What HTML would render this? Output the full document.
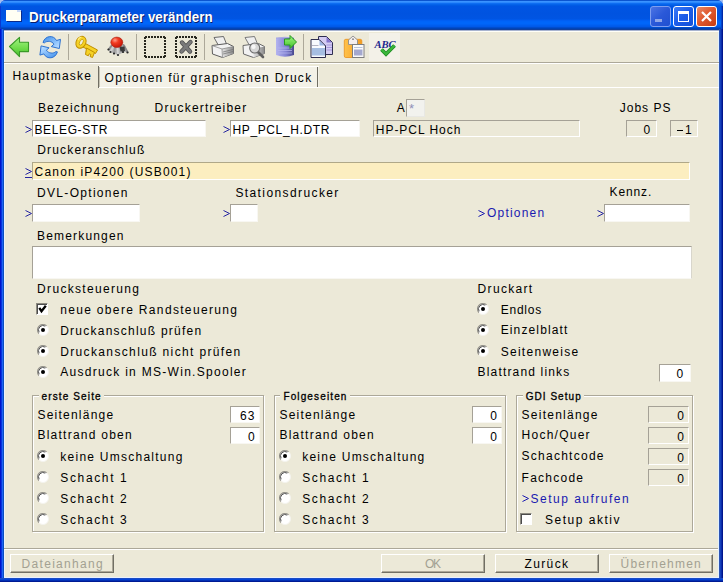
<!DOCTYPE html>
<html><head><meta charset="utf-8"><style>
html,body{margin:0;padding:0;width:723px;height:582px;overflow:hidden;background:#ECE9D8}
*{box-sizing:border-box}
.ab{position:absolute}
.t{position:absolute;font-family:"Liberation Sans",sans-serif;font-size:12px;line-height:13px;white-space:nowrap;color:#000}
.lg{position:absolute;font-family:"Liberation Sans",sans-serif;font-size:10px;line-height:11px;white-space:nowrap;color:#000;-webkit-text-stroke:0.3px #000;background:#ECE9D8;padding:0 2px 0 3px}
.in{position:absolute;background:#fff;border-top:1px solid #A5A196;border-left:1px solid #A5A196;border-right:1px solid #F8F7F2;border-bottom:1px solid #F8F7F2}
.ro{position:absolute;background:#ECE9D8;border-top:1px solid #A5A196;border-left:1px solid #A5A196;border-right:1px solid #fff;border-bottom:1px solid #fff}
.cb{position:absolute;width:12px;height:12px;background:#fff;border-top:1px solid #8C8A80;border-left:1px solid #8C8A80;border-right:1px solid #fff;border-bottom:1px solid #fff;box-shadow:inset 1px 1px 0 #4C4C4C}
.grp{position:absolute;border:1px solid #ACA899;box-shadow:1px 1px 0 #fff, inset 1px 1px 0 #fff}
.btn{position:absolute;background:#ECE9D8;border-top:1px solid #fff;border-left:1px solid #fff;border-right:1px solid #716F64;border-bottom:1px solid #716F64;box-shadow:inset -1px -1px 0 #ACA899}
.lnk{color:#1A1AB0}
.dis{color:#A3A192}
</style></head><body>
<div class="ab" style="left:0;top:0;width:723px;height:12px;background:#A4BEF0"></div>
<div class="ab" style="left:0;top:0;width:723px;height:582px;background:#0831D9;border-radius:6px 6px 0 0"></div>
<div class="ab" style="left:0;top:0;width:723px;height:32px;border-radius:6px 6px 0 0;background:linear-gradient(to bottom,#0B55D0 0px,#0B55D0 1px,#3A93FF 1px,#3A93FF 2px,#2C88FC 2px,#2C88FC 3px,#0E6EF2 3px,#0E6EF2 4px,#0563EA 4px,#0563EA 5px,#005BE5 5px,#005BE5 6px,#0055E3 6px,#0053E0 14px,#0055E3 19px,#005CF0 20px,#0062F8 21px,#0066FA 22px,#0066FA 24px,#005EF0 25px,#005CEC 26px,#0056E6 27px,#0044B8 28px,#0044B8 29px,#1040A0 29px,#1040A0 30px,#A8B4D0 30px,#A8B4D0 31px,#FFFFF8 31px,#FFFFF8 32px)"></div>
<div class="ab" style="left:0;top:6px;width:1px;height:24px;background:#0838D0"></div>
<div class="ab" style="left:0;top:29px;width:4px;height:553px;background:linear-gradient(to right,#0013CC 0px,#0013CC 1px,#0736DE 1px,#0736DE 2px,#1D63F5 2px,#1D63F5 3px,#0A4FBF 3px)"></div>
<div class="ab" style="left:721px;top:6px;width:2px;height:24px;background:linear-gradient(to right,#0444C8 1px,#0028A8 1px)"></div>
<div class="ab" style="left:719px;top:29px;width:4px;height:553px;background:linear-gradient(to right,#2C54B4 0px,#2C54B4 1px,#1540BC 1px,#1540BC 2px,#0A2CA8 2px,#0A2CA8 3px,#00148C 3px)"></div>
<div class="ab" style="left:4px;top:30px;width:715px;height:2px;background:linear-gradient(to bottom,#A8B4D0 1px,#FFFFF8 1px)"></div>
<div class="ab" style="left:0;top:578px;width:723px;height:4px;background:linear-gradient(to bottom,#1A4CC4 0px,#1A4CC4 1px,#0444D8 1px,#0444D8 2px,#0230B4 2px,#0230B4 3px,#001A94 3px)"></div>
<div class="ab" style="left:4px;top:32px;width:715px;height:546px;background:#ECE9D8"></div>
<div class="ab" style="left:4px;top:32px;width:1px;height:546px;background:#EAF2FF"></div>
<div class="ab" style="left:718px;top:32px;width:1px;height:546px;background:#E0F0FF"></div>
<div class="ab" style="left:4px;top:577px;width:715px;height:1px;background:#E8F0FF"></div>
<div class="ab" style="left:6px;top:10px;width:15px;height:11px;background:#FFFFF4;box-shadow:1px 1px 0 #0A2A8A"></div>
<div class="ab" style="left:17px;top:10px;width:4px;height:2px;background:#C8D8F8"></div>
<div class="ab" style="left:29.3px;top:10px;font-family:'Liberation Sans';font-weight:bold;font-size:14px;line-height:15px;color:#fff;letter-spacing:0px;transform:scaleX(0.955);transform-origin:0 0;text-shadow:1px 1px 0 #0A1E6A;white-space:nowrap">Druckerparameter verändern</div>
<div class="ab" style="left:650px;top:6px;width:21px;height:21px;border-radius:3px;border:1px solid #7E9EF0;background:linear-gradient(135deg,#4C74E4,#2A58D8 50%,#2050D0)"></div>
<div class="ab" style="left:655px;top:19px;width:7px;height:3px;background:#8FA6E8"></div>
<div class="ab" style="left:673px;top:6px;width:21px;height:21px;border-radius:3px;border:1px solid #fff;background:linear-gradient(135deg,#3C7CF8,#1C5CE8 50%,#1450D8)"></div>
<div class="ab" style="left:678px;top:11px;width:11px;height:11px;border:1px solid #fff;border-top-width:3px"></div>
<div class="ab" style="left:696px;top:6px;width:21px;height:21px;border-radius:3px;border:1px solid #fff;background:linear-gradient(135deg,#E88A68,#E05A30 45%,#C83C10)"></div>
<svg class="ab" style="left:696px;top:6px" width="21" height="21"><path d="M6 6 L15 15 M15 6 L6 15" stroke="#fff" stroke-width="2.2"/></svg>
<div class="ab" style="left:4px;top:62px;width:715px;height:1px;background:#ACA899"></div>
<div class="ab" style="left:4px;top:63px;width:715px;height:1px;background:#FFFFFF"></div>
<div class="ab" style="left:68px;top:34px;width:1px;height:26px;background:#ACA899"></div>
<div class="ab" style="left:136px;top:34px;width:1px;height:26px;background:#ACA899"></div>
<div class="ab" style="left:204px;top:34px;width:1px;height:26px;background:#ACA899"></div>
<div class="ab" style="left:303px;top:34px;width:1px;height:26px;background:#ACA899"></div>

<svg class="ab" style="left:4px;top:33px" width="28" height="28" viewBox="0 0 28 28">
 <defs><linearGradient id="ga" x1="0" y1="0" x2="0" y2="1"><stop offset="0" stop-color="#A4F484"/><stop offset="0.6" stop-color="#6CDA48"/><stop offset="1" stop-color="#48BC30"/></linearGradient></defs>
 <path d="M5.5 13.5 L15.5 4.3 L15.5 9.3 L24.5 9.3 L24.5 18.6 L15.5 18.6 L15.5 23.6 Z" fill="url(#ga)" stroke="#3A9A28" stroke-width="1.1" stroke-linejoin="round"/>
</svg>
<svg class="ab" style="left:36px;top:33px" width="28" height="28" viewBox="0 0 28 28">
 <defs><linearGradient id="gb" x1="0" y1="0" x2="1" y2="1"><stop offset="0" stop-color="#3E8EEA"/><stop offset="0.7" stop-color="#9CCCFF"/><stop offset="1" stop-color="#C8E4FF"/></linearGradient></defs>
 <path id="ar" d="M7 9.5 C9 2.5 17.5 1.5 20.5 7.5 L24.5 6.3 L23.3 15.5 L15.3 13.6 L18 11.2 C15.8 7.8 11 7.5 8.6 9.8 Z" fill="url(#gb)" stroke="#2E72D0" stroke-width="1" stroke-linejoin="round"/>
 <use href="#ar" transform="rotate(180 14.2 14.2)"/>
</svg>
<svg class="ab" style="left:72px;top:33px" width="28" height="28" viewBox="0 0 28 28">
 <g stroke="#C09000" stroke-width="1" fill="#F6D226" stroke-linejoin="round">
 <path d="M11.5 9.5 L25.5 17 L23.5 20.5 L10 13.5 Z"/>
 <path d="M14.5 15 L22.5 19.5 L20.5 24.5 L18 23.5 L18.8 21.5 L17.2 20.8 L16.3 22.8 L13.5 21.5 Z"/>
 <ellipse cx="9" cy="9.3" rx="4.8" ry="6.2" transform="rotate(28 9 9.3)"/>
 </g>
 <ellipse cx="9.3" cy="9.3" rx="1.6" ry="3.2" transform="rotate(28 9.3 9.3)" fill="#F2F0DC" stroke="#C8A000" stroke-width="0.8"/>
 <path d="M6 7 Q7 4.5 9.5 4" stroke="#FFF08A" stroke-width="1.2" fill="none"/>
</svg>
<svg class="ab" style="left:104px;top:33px" width="28" height="28" viewBox="0 0 28 28">
 <path d="M6 12.5 Q13 9.5 21 12 L24 18.5 L19 19.5 L14 22 L10 20.5 L6.5 19 L4 16.5 Z" fill="#B4B4B4"/>
 <g stroke-width="1.8" fill="none" stroke-linecap="round">
 <path d="M8 12.5 L4.5 16.5" stroke="#8A8A8A"/><path d="M9.5 13 L6.5 19" stroke="#D0D0D0"/><path d="M11.5 13 L10 20.5" stroke="#9A9A9A"/>
 <path d="M13.5 13 L14 22" stroke="#D4D4D4"/><path d="M16.5 13 L19 19" stroke="#7A7A7A"/><path d="M19.5 12 L23.5 19" stroke="#8A8A8A"/>
 </g>
 <g fill="#2A2A2A"><circle cx="4.5" cy="16.5" r="1.1"/><circle cx="6.5" cy="19" r="1.1"/><circle cx="10" cy="20.5" r="1.1"/><circle cx="14" cy="22" r="1.1"/><circle cx="19" cy="19" r="1.1"/><circle cx="23.5" cy="19.5" r="1.1"/></g>
 <path d="M15.5 14 L20.5 13.5 L21 18 L16.5 18.5 Z" fill="#3A3A3A"/>
 <defs><radialGradient id="gr" cx="0.35" cy="0.3" r="0.7"><stop offset="0" stop-color="#FF9A88"/><stop offset="0.4" stop-color="#F23C22"/><stop offset="1" stop-color="#C81808"/></radialGradient></defs>
 <ellipse cx="12.8" cy="9.3" rx="6" ry="5.2" fill="url(#gr)" stroke="#A82010" stroke-width="0.6"/>
</svg>
<svg class="ab" style="left:144px;top:36px" width="22" height="22" shape-rendering="crispEdges"><g fill="#26261E"><rect x="1" y="0" width="2" height="2"/><rect x="1" y="20" width="2" height="2"/><rect x="0" y="1" width="2" height="2"/><rect x="20" y="1" width="2" height="2"/><rect x="4" y="0" width="2" height="2"/><rect x="4" y="20" width="2" height="2"/><rect x="0" y="4" width="2" height="2"/><rect x="20" y="4" width="2" height="2"/><rect x="7" y="0" width="2" height="2"/><rect x="7" y="20" width="2" height="2"/><rect x="0" y="7" width="2" height="2"/><rect x="20" y="7" width="2" height="2"/><rect x="10" y="0" width="2" height="2"/><rect x="10" y="20" width="2" height="2"/><rect x="0" y="10" width="2" height="2"/><rect x="20" y="10" width="2" height="2"/><rect x="13" y="0" width="2" height="2"/><rect x="13" y="20" width="2" height="2"/><rect x="0" y="13" width="2" height="2"/><rect x="20" y="13" width="2" height="2"/><rect x="16" y="0" width="2" height="2"/><rect x="16" y="20" width="2" height="2"/><rect x="0" y="16" width="2" height="2"/><rect x="20" y="16" width="2" height="2"/><rect x="19" y="0" width="2" height="2"/><rect x="19" y="20" width="2" height="2"/><rect x="0" y="19" width="2" height="2"/><rect x="20" y="19" width="2" height="2"/></g></svg>
<svg class="ab" style="left:175px;top:36px" width="22" height="22" shape-rendering="crispEdges"><g fill="#26261E"><rect x="1" y="0" width="2" height="2"/><rect x="1" y="20" width="2" height="2"/><rect x="0" y="1" width="2" height="2"/><rect x="20" y="1" width="2" height="2"/><rect x="4" y="0" width="2" height="2"/><rect x="4" y="20" width="2" height="2"/><rect x="0" y="4" width="2" height="2"/><rect x="20" y="4" width="2" height="2"/><rect x="7" y="0" width="2" height="2"/><rect x="7" y="20" width="2" height="2"/><rect x="0" y="7" width="2" height="2"/><rect x="20" y="7" width="2" height="2"/><rect x="10" y="0" width="2" height="2"/><rect x="10" y="20" width="2" height="2"/><rect x="0" y="10" width="2" height="2"/><rect x="20" y="10" width="2" height="2"/><rect x="13" y="0" width="2" height="2"/><rect x="13" y="20" width="2" height="2"/><rect x="0" y="13" width="2" height="2"/><rect x="20" y="13" width="2" height="2"/><rect x="16" y="0" width="2" height="2"/><rect x="16" y="20" width="2" height="2"/><rect x="0" y="16" width="2" height="2"/><rect x="20" y="16" width="2" height="2"/><rect x="19" y="0" width="2" height="2"/><rect x="19" y="20" width="2" height="2"/><rect x="0" y="19" width="2" height="2"/><rect x="20" y="19" width="2" height="2"/></g></svg>
<svg class="ab" style="left:173px;top:33px" width="28" height="28" viewBox="0 0 28 28">
 <path d="M8.5 18.5 L17.5 9 M9 9.5 L17 18.5" stroke="#505050" stroke-width="4.4" stroke-linecap="round"/>
 <path d="M8.5 18.5 L17.5 9 M9 9.5 L17 18.5" stroke="#7A7A7A" stroke-width="2.8" stroke-linecap="round"/>
</svg>
<svg class="ab" style="left:208px;top:33px" width="28" height="28" viewBox="0 0 28 28">
 <defs><linearGradient id="gp" x1="0" y1="0" x2="1" y2="0"><stop offset="0" stop-color="#E6E6E6"/><stop offset="1" stop-color="#8A8A8A"/></linearGradient></defs>
 <path d="M6 4.5 L15.5 3.5 L18.5 11 L10.5 12.5 Z" fill="#EFEFEF" stroke="#6A6A6A" stroke-width="1"/>
 <path d="M4 12.5 L19.5 10.5 L25.5 13.5 L25.5 20.5 L14.5 24.5 L4.5 21 Z" fill="#F2F2F2" stroke="#5E5E5E" stroke-width="1" stroke-linejoin="round"/>
 <path d="M14 16 L25.5 13.5 L25.5 20.5 L14.5 24.5 Z" fill="url(#gp)"/>
 <path d="M4 12.5 L14 16 L25.5 13.5 M14 16 L14.5 24.5" stroke="#8A8A8A" stroke-width="0.8" fill="none"/>
 <path d="M15 19 L25 16.5 M15 21 L25 18.5" stroke="#707070" stroke-width="0.7"/>
</svg>
<svg class="ab" style="left:239px;top:33px" width="28" height="28" viewBox="0 0 28 28">
 <path d="M6 4.5 L15.5 3.5 L18.5 11 L10.5 12.5 Z" fill="#EFEFEF" stroke="#7A7A7A" stroke-width="1"/>
 <path d="M4 12.5 L19.5 10.5 L25.5 13.5 L25.5 20.5 L14.5 24.5 L4.5 21 Z" fill="#F2F2F2" stroke="#6A6A6A" stroke-width="1" stroke-linejoin="round"/>
 <path d="M14 16 L25.5 13.5 L25.5 20.5 L14.5 24.5 Z" fill="url(#gp)"/>
 <path d="M18.5 18.5 L24 24" stroke="#606060" stroke-width="2.6" stroke-linecap="round"/>
 <circle cx="15.7" cy="15" r="5" fill="#D6D6D6" stroke="#6A6A6A" stroke-width="1.1"/>
 <circle cx="14.5" cy="13.8" r="2.2" fill="#F6F6F6"/>
</svg>
<svg class="ab" style="left:272px;top:33px" width="28" height="28" viewBox="0 0 28 28">
 <defs><linearGradient id="gd" x1="0" y1="0" x2="1" y2="0"><stop offset="0" stop-color="#B4B4F0"/><stop offset="0.55" stop-color="#8484D4"/><stop offset="1" stop-color="#48488E"/></linearGradient>
 <linearGradient id="ge" x1="0" y1="0" x2="0" y2="1"><stop offset="0" stop-color="#A0F880"/><stop offset="1" stop-color="#40C02A"/></linearGradient></defs>
 <path d="M4 5 L22 5 L22 22 Q13 25.5 4 22 Z" fill="url(#gd)"/>
 <path d="M4 5 Q13 3.5 22 5" fill="#C0C0F0" stroke="#A0A0E0" stroke-width="0.8"/>
 <path d="M6 15 L20 15 M6 17.5 L20 17.5 M6 20 L20 20" stroke="#B8B8EE" stroke-width="0.9" opacity="0.8"/>
 <path d="M12.5 6 L18 6 L18 2.5 L24.5 9 L18 15.5 L18 12 L12.5 12 Z" fill="url(#ge)" stroke="#2A9A20" stroke-width="1" stroke-linejoin="round"/>
</svg>
<svg class="ab" style="left:306px;top:33px" width="28" height="28" viewBox="0 0 28 28">
 <path d="M12.5 3.5 L20.5 3.5 L26.5 9.5 L26.5 21.5 L19.5 21.5 L19.5 13 L13 6.5 L12.5 6.5 Z" fill="#D4CCF2" stroke="#2E2E50" stroke-width="1" stroke-linejoin="round"/>
 <path d="M20.5 4 L26 9.5 L20.5 9.5 Z" fill="#8474CC"/>
 <path d="M20.5 12 L26 12 M20.5 14.5 L26 14.5 M20.5 17 L26 17" stroke="#A898DC" stroke-width="1"/>
 <path d="M5 6.5 L13 6.5 L19.5 13 L19.5 24.5 L5 24.5 Z" fill="#F8FAFF" stroke="#2E2E50" stroke-width="1" stroke-linejoin="round"/>
 <path d="M13.5 7.5 L13.5 12.5 L18.5 12.5 Z" fill="#9CB4E4"/>
 <rect x="6" y="15" width="13" height="7.5" fill="#A6BEE2"/>
 <path d="M6 12.5 L12.5 12.5" stroke="#B4B4C4" stroke-width="1"/>
</svg>
<svg class="ab" style="left:340px;top:33px" width="28" height="28" viewBox="0 0 28 28">
 <defs><linearGradient id="gf" x1="0" y1="0" x2="1" y2="0"><stop offset="0" stop-color="#FFC24A"/><stop offset="1" stop-color="#F29A1E"/></linearGradient></defs>
 <rect x="4.3" y="6.3" width="17.5" height="18.2" rx="1.5" fill="url(#gf)" stroke="#E8901A" stroke-width="0.8"/>
 <path d="M8.5 11.5 L8.5 7 L13 3 L17.5 7 L17.5 11.5 Z" fill="#F4EEEE" stroke="#8C8C8C" stroke-width="0.9" stroke-linejoin="round"/>
 <circle cx="13" cy="6.2" r="0.9" fill="#808080"/>
 <rect x="12.5" y="11.5" width="11.5" height="13" fill="#FAFAFA" stroke="#7E7E7E" stroke-width="1"/>
 <path d="M14 14.5 L22.5 14.5" stroke="#B8C4DC" stroke-width="1"/>
 <rect x="14" y="16.5" width="8.5" height="6" fill="#A4A8CE"/>
</svg>
<div class="ab" style="left:369px;top:33px;width:31px;height:28px;background:#F3F1E8"></div>
<svg class="ab" style="left:372px;top:33px" width="28" height="28" viewBox="0 0 28 28">
 <text x="2.4" y="14.6" font-family="Liberation Serif" font-style="italic" font-weight="bold" font-size="11.2" fill="#1E2A8E" textLength="21.3" lengthAdjust="spacingAndGlyphs">ABC</text>
 <path d="M9.5 16.5 L14 21 L22.5 12.5" stroke="#1E8E22" stroke-width="3.8" fill="none"/>
 <path d="M9.5 16.5 L14 21 L22.5 12.5" stroke="#3CB83C" stroke-width="2" fill="none"/>
</svg>
<div class="ab" style="left:99px;top:66px;width:220px;height:22px;background:#F3F1E7;border-top:1px solid #fff"></div>
<div class="ab" style="left:98px;top:66px;width:1px;height:22px;background:#716F64"></div>
<div class="ab" style="left:99px;top:67px;width:1px;height:20px;background:#C5C2B2"></div>
<div class="ab" style="left:317px;top:67px;width:1px;height:21px;background:#716F64"></div>
<div class="ab" style="left:99px;top:87px;width:620px;height:1px;background:#FFFFFF"></div>
<div class="t" style="left:12.4px;top:70px;letter-spacing:1.25px;">Hauptmaske</div>
<div class="t" style="left:104.6px;top:72px;letter-spacing:1.28px;">Optionen für graphischen Druck</div>
<div class="t" style="left:37.9px;top:102px;letter-spacing:1.16px;">Bezeichnung</div>
<div class="t" style="left:154.6px;top:102px;letter-spacing:1.20px;">Druckertreiber</div>
<div class="t" style="left:396.8px;top:102px;letter-spacing:0.00px;">A</div>
<div class="ro" style="left:406px;top:99px;width:19px;height:18px;background:#F2F2EE;border-right:1px solid #E8E8E4;border-bottom:1px solid #E8E8E4"></div>
<div class="t" style="left:409.0px;top:102px;letter-spacing:1.25px;color:#9090B8;font-size:13px">*</div>
<div class="t" style="left:619.7px;top:102px;letter-spacing:1.02px;">Jobs PS</div>
<svg class="ab" style="left:25px;top:126px" width="7" height="7"><path d="M0.5 0.5 L6.5 3.5 L0.5 6.5" stroke="#2424A0" stroke-width="1" fill="none"/></svg>
<div class="in" style="left:32px;top:120px;width:174px;height:17px;"></div>
<div class="t" style="left:34.5px;top:124px;letter-spacing:0.62px;">BELEG-STR</div>
<svg class="ab" style="left:223px;top:126px" width="7" height="7"><path d="M0.5 0.5 L6.5 3.5 L0.5 6.5" stroke="#2424A0" stroke-width="1" fill="none"/></svg>
<div class="in" style="left:230px;top:120px;width:130px;height:17px;"></div>
<div class="t" style="left:232.5px;top:124px;letter-spacing:0.62px;">HP_PCL_H.DTR</div>
<div class="ro" style="left:373px;top:120px;width:207px;height:17px;"></div>
<div class="t" style="left:375.8px;top:124px;letter-spacing:0.97px;">HP-PCL Hoch</div>
<div class="ro" style="left:626px;top:120px;width:31px;height:17px;"></div>
<div class="t" style="left:643.6px;top:124px;letter-spacing:1.25px;letter-spacing:1.0px;">0</div>
<div class="ro" style="left:670px;top:120px;width:28px;height:17px;"></div>
<div class="ab" style="left:677px;top:130px;width:6px;height:1px;background:#000"></div>
<div class="t" style="left:685.0px;top:124px;letter-spacing:1.25px;letter-spacing:1.0px;">1</div>
<div class="t" style="left:37.3px;top:144px;letter-spacing:1.16px;">Druckeranschluß</div>
<svg class="ab" style="left:25px;top:168px" width="7" height="10"><path d="M0.5 0.5 L6.5 3.5 L0.5 6.5" stroke="#2424A0" stroke-width="1" fill="none"/><rect x="0" y="9" width="7" height="1" fill="#2424A0"/></svg>
<div class="in" style="left:32px;top:162px;width:658px;height:18px;background:#FCEEC0;border-top-color:#B0A888;border-left-color:#B0A888;border-bottom-color:#FFFFFF;border-right-color:#FFFFFF"></div>
<div class="t" style="left:34.6px;top:166px;letter-spacing:1.19px;">Canon iP4200 (USB001)</div>
<div class="t" style="left:37.1px;top:187px;letter-spacing:1.30px;">DVL-Optionen</div>
<div class="t" style="left:235.4px;top:187px;letter-spacing:1.40px;">Stationsdrucker</div>
<div class="t" style="left:609.6px;top:186px;letter-spacing:0.87px;">Kennz.</div>
<svg class="ab" style="left:25px;top:210px" width="7" height="7"><path d="M0.5 0.5 L6.5 3.5 L0.5 6.5" stroke="#2424A0" stroke-width="1" fill="none"/></svg>
<div class="in" style="left:32px;top:204px;width:108px;height:18px;"></div>
<svg class="ab" style="left:223px;top:210px" width="7" height="7"><path d="M0.5 0.5 L6.5 3.5 L0.5 6.5" stroke="#2424A0" stroke-width="1" fill="none"/></svg>
<div class="in" style="left:230px;top:204px;width:28px;height:18px;"></div>
<svg class="ab" style="left:478px;top:210px" width="7" height="7"><path d="M0.5 0.5 L6.5 3.5 L0.5 6.5" stroke="#1A1AB0" stroke-width="1" fill="none"/></svg>
<div class="t" style="left:487.0px;top:207px;letter-spacing:1.20px;color:#1A1AB0;">Optionen</div>
<svg class="ab" style="left:597px;top:210px" width="7" height="7"><path d="M0.5 0.5 L6.5 3.5 L0.5 6.5" stroke="#2424A0" stroke-width="1" fill="none"/></svg>
<div class="in" style="left:604px;top:204px;width:86px;height:18px;"></div>
<div class="t" style="left:37.1px;top:230px;letter-spacing:1.16px;">Bemerkungen</div>
<div class="in" style="left:32px;top:246px;width:660px;height:33px;border-right:1px solid #D8D6CC"></div>
<div class="t" style="left:37.1px;top:283px;letter-spacing:1.32px;">Drucksteuerung</div>
<div class="cb" style="left:36px;top:303px"><svg width="12" height="12" style="position:absolute;left:0;top:0"><path d="M2.3 3.8 L4.5 7.2 L8.8 1.8" stroke="#000" stroke-width="2.3" fill="none"/></svg></div>
<div class="t" style="left:60.2px;top:304px;letter-spacing:1.33px;">neue obere Randsteuerung</div>
<svg class="ab" style="left:37px;top:324px" width="12" height="12" viewBox="0 0 12 12"><circle cx="6" cy="6" r="5.5" fill="#fff"/><path d="M1.79 9.54 A5.5 5.5 0 0 1 9.54 1.79" stroke="#8E8C84" stroke-width="1.1" fill="none"/><path d="M2.10 8.25 A4.5 4.5 0 0 1 8.25 2.10" stroke="#4A4A4A" stroke-width="1" fill="none"/><path d="M9.89 2.11 A5.5 5.5 0 0 1 2.11 9.89" stroke="#F4F3EE" stroke-width="1" fill="none"/><circle cx="6" cy="6" r="2" fill="#000"/></svg>
<div class="t" style="left:60.2px;top:325px;letter-spacing:1.24px;">Druckanschluß prüfen</div>
<svg class="ab" style="left:37px;top:345px" width="12" height="12" viewBox="0 0 12 12"><circle cx="6" cy="6" r="5.5" fill="#fff"/><path d="M1.79 9.54 A5.5 5.5 0 0 1 9.54 1.79" stroke="#8E8C84" stroke-width="1.1" fill="none"/><path d="M2.10 8.25 A4.5 4.5 0 0 1 8.25 2.10" stroke="#4A4A4A" stroke-width="1" fill="none"/><path d="M9.89 2.11 A5.5 5.5 0 0 1 2.11 9.89" stroke="#F4F3EE" stroke-width="1" fill="none"/><circle cx="6" cy="6" r="2" fill="#000"/></svg>
<div class="t" style="left:60.2px;top:346px;letter-spacing:1.36px;">Druckanschluß nicht prüfen</div>
<svg class="ab" style="left:37px;top:366px" width="12" height="12" viewBox="0 0 12 12"><circle cx="6" cy="6" r="5.5" fill="#fff"/><path d="M1.79 9.54 A5.5 5.5 0 0 1 9.54 1.79" stroke="#8E8C84" stroke-width="1.1" fill="none"/><path d="M2.10 8.25 A4.5 4.5 0 0 1 8.25 2.10" stroke="#4A4A4A" stroke-width="1" fill="none"/><path d="M9.89 2.11 A5.5 5.5 0 0 1 2.11 9.89" stroke="#F4F3EE" stroke-width="1" fill="none"/><circle cx="6" cy="6" r="2" fill="#000"/></svg>
<div class="t" style="left:60.2px;top:366px;letter-spacing:1.29px;">Ausdruck in MS-Win.Spooler</div>
<div class="t" style="left:477.6px;top:283px;letter-spacing:1.32px;">Druckart</div>
<svg class="ab" style="left:477px;top:303px" width="12" height="12" viewBox="0 0 12 12"><circle cx="6" cy="6" r="5.5" fill="#fff"/><path d="M1.79 9.54 A5.5 5.5 0 0 1 9.54 1.79" stroke="#8E8C84" stroke-width="1.1" fill="none"/><path d="M2.10 8.25 A4.5 4.5 0 0 1 8.25 2.10" stroke="#4A4A4A" stroke-width="1" fill="none"/><path d="M9.89 2.11 A5.5 5.5 0 0 1 2.11 9.89" stroke="#F4F3EE" stroke-width="1" fill="none"/><circle cx="6" cy="6" r="2" fill="#000"/></svg>
<div class="t" style="left:500.7px;top:304px;letter-spacing:0.76px;">Endlos</div>
<svg class="ab" style="left:477px;top:324px" width="12" height="12" viewBox="0 0 12 12"><circle cx="6" cy="6" r="5.5" fill="#fff"/><path d="M1.79 9.54 A5.5 5.5 0 0 1 9.54 1.79" stroke="#8E8C84" stroke-width="1.1" fill="none"/><path d="M2.10 8.25 A4.5 4.5 0 0 1 8.25 2.10" stroke="#4A4A4A" stroke-width="1" fill="none"/><path d="M9.89 2.11 A5.5 5.5 0 0 1 2.11 9.89" stroke="#F4F3EE" stroke-width="1" fill="none"/><circle cx="6" cy="6" r="2" fill="#000"/></svg>
<div class="t" style="left:500.7px;top:324px;letter-spacing:1.13px;">Einzelblatt</div>
<svg class="ab" style="left:477px;top:344.5px" width="12" height="12" viewBox="0 0 12 12"><circle cx="6" cy="6" r="5.5" fill="#fff"/><path d="M1.79 9.54 A5.5 5.5 0 0 1 9.54 1.79" stroke="#8E8C84" stroke-width="1.1" fill="none"/><path d="M2.10 8.25 A4.5 4.5 0 0 1 8.25 2.10" stroke="#4A4A4A" stroke-width="1" fill="none"/><path d="M9.89 2.11 A5.5 5.5 0 0 1 2.11 9.89" stroke="#F4F3EE" stroke-width="1" fill="none"/><circle cx="6" cy="6" r="2" fill="#000"/></svg>
<div class="t" style="left:500.7px;top:346px;letter-spacing:1.28px;">Seitenweise</div>
<div class="t" style="left:477.6px;top:366px;letter-spacing:1.16px;">Blattrand links</div>
<div class="in" style="left:659px;top:364px;width:32px;height:18px;"></div>
<div class="t" style="left:676.4px;top:368px;letter-spacing:1.25px;letter-spacing:1.0px;">0</div>
<div class="grp" style="left:32px;top:395px;width:232px;height:137px;"></div>
<div class="lg" style="left:38.6px;top:391px;letter-spacing:1.12px">erste Seite</div>
<div class="grp" style="left:274px;top:395px;width:232px;height:137px;"></div>
<div class="lg" style="left:280.4px;top:391px;letter-spacing:1.13px">Folgeseiten</div>
<div class="grp" style="left:516px;top:395px;width:177px;height:137px;"></div>
<div class="lg" style="left:522.7px;top:391px;letter-spacing:1.04px">GDI Setup</div>
<div class="t" style="left:37.4px;top:409px;letter-spacing:1.24px;">Seitenlänge</div>
<div class="in" style="left:230px;top:406px;width:30px;height:17px;"></div>
<div class="t" style="left:37.4px;top:429px;letter-spacing:1.25px;">Blattrand oben</div>
<div class="in" style="left:230px;top:427px;width:30px;height:17px;"></div>
<svg class="ab" style="left:37px;top:450px" width="12" height="12" viewBox="0 0 12 12"><circle cx="6" cy="6" r="5.5" fill="#fff"/><path d="M1.79 9.54 A5.5 5.5 0 0 1 9.54 1.79" stroke="#8E8C84" stroke-width="1.1" fill="none"/><path d="M2.10 8.25 A4.5 4.5 0 0 1 8.25 2.10" stroke="#4A4A4A" stroke-width="1" fill="none"/><path d="M9.89 2.11 A5.5 5.5 0 0 1 2.11 9.89" stroke="#F4F3EE" stroke-width="1" fill="none"/><circle cx="6" cy="6" r="2" fill="#000"/></svg>
<div class="t" style="left:60.3px;top:451px;letter-spacing:1.25px;">keine Umschaltung</div>
<svg class="ab" style="left:37px;top:471px" width="12" height="12" viewBox="0 0 12 12"><circle cx="6" cy="6" r="5.5" fill="#fff"/><path d="M1.79 9.54 A5.5 5.5 0 0 1 9.54 1.79" stroke="#8E8C84" stroke-width="1.1" fill="none"/><path d="M2.10 8.25 A4.5 4.5 0 0 1 8.25 2.10" stroke="#4A4A4A" stroke-width="1" fill="none"/><path d="M9.89 2.11 A5.5 5.5 0 0 1 2.11 9.89" stroke="#F4F3EE" stroke-width="1" fill="none"/></svg>
<div class="t" style="left:60.3px;top:472px;letter-spacing:1.64px;">Schacht 1</div>
<svg class="ab" style="left:37px;top:492px" width="12" height="12" viewBox="0 0 12 12"><circle cx="6" cy="6" r="5.5" fill="#fff"/><path d="M1.79 9.54 A5.5 5.5 0 0 1 9.54 1.79" stroke="#8E8C84" stroke-width="1.1" fill="none"/><path d="M2.10 8.25 A4.5 4.5 0 0 1 8.25 2.10" stroke="#4A4A4A" stroke-width="1" fill="none"/><path d="M9.89 2.11 A5.5 5.5 0 0 1 2.11 9.89" stroke="#F4F3EE" stroke-width="1" fill="none"/></svg>
<div class="t" style="left:60.3px;top:493px;letter-spacing:1.64px;">Schacht 2</div>
<svg class="ab" style="left:37px;top:513px" width="12" height="12" viewBox="0 0 12 12"><circle cx="6" cy="6" r="5.5" fill="#fff"/><path d="M1.79 9.54 A5.5 5.5 0 0 1 9.54 1.79" stroke="#8E8C84" stroke-width="1.1" fill="none"/><path d="M2.10 8.25 A4.5 4.5 0 0 1 8.25 2.10" stroke="#4A4A4A" stroke-width="1" fill="none"/><path d="M9.89 2.11 A5.5 5.5 0 0 1 2.11 9.89" stroke="#F4F3EE" stroke-width="1" fill="none"/></svg>
<div class="t" style="left:60.3px;top:514px;letter-spacing:1.64px;">Schacht 3</div>
<div class="t" style="left:279.4px;top:409px;letter-spacing:1.24px;">Seitenlänge</div>
<div class="in" style="left:472px;top:406px;width:30px;height:17px;"></div>
<div class="t" style="left:279.4px;top:429px;letter-spacing:1.25px;">Blattrand oben</div>
<div class="in" style="left:472px;top:427px;width:30px;height:17px;"></div>
<svg class="ab" style="left:279px;top:450px" width="12" height="12" viewBox="0 0 12 12"><circle cx="6" cy="6" r="5.5" fill="#fff"/><path d="M1.79 9.54 A5.5 5.5 0 0 1 9.54 1.79" stroke="#8E8C84" stroke-width="1.1" fill="none"/><path d="M2.10 8.25 A4.5 4.5 0 0 1 8.25 2.10" stroke="#4A4A4A" stroke-width="1" fill="none"/><path d="M9.89 2.11 A5.5 5.5 0 0 1 2.11 9.89" stroke="#F4F3EE" stroke-width="1" fill="none"/><circle cx="6" cy="6" r="2" fill="#000"/></svg>
<div class="t" style="left:302.2px;top:451px;letter-spacing:1.25px;">keine Umschaltung</div>
<svg class="ab" style="left:279px;top:471px" width="12" height="12" viewBox="0 0 12 12"><circle cx="6" cy="6" r="5.5" fill="#fff"/><path d="M1.79 9.54 A5.5 5.5 0 0 1 9.54 1.79" stroke="#8E8C84" stroke-width="1.1" fill="none"/><path d="M2.10 8.25 A4.5 4.5 0 0 1 8.25 2.10" stroke="#4A4A4A" stroke-width="1" fill="none"/><path d="M9.89 2.11 A5.5 5.5 0 0 1 2.11 9.89" stroke="#F4F3EE" stroke-width="1" fill="none"/></svg>
<div class="t" style="left:302.2px;top:472px;letter-spacing:1.64px;">Schacht 1</div>
<svg class="ab" style="left:279px;top:492px" width="12" height="12" viewBox="0 0 12 12"><circle cx="6" cy="6" r="5.5" fill="#fff"/><path d="M1.79 9.54 A5.5 5.5 0 0 1 9.54 1.79" stroke="#8E8C84" stroke-width="1.1" fill="none"/><path d="M2.10 8.25 A4.5 4.5 0 0 1 8.25 2.10" stroke="#4A4A4A" stroke-width="1" fill="none"/><path d="M9.89 2.11 A5.5 5.5 0 0 1 2.11 9.89" stroke="#F4F3EE" stroke-width="1" fill="none"/></svg>
<div class="t" style="left:302.2px;top:493px;letter-spacing:1.64px;">Schacht 2</div>
<svg class="ab" style="left:279px;top:513px" width="12" height="12" viewBox="0 0 12 12"><circle cx="6" cy="6" r="5.5" fill="#fff"/><path d="M1.79 9.54 A5.5 5.5 0 0 1 9.54 1.79" stroke="#8E8C84" stroke-width="1.1" fill="none"/><path d="M2.10 8.25 A4.5 4.5 0 0 1 8.25 2.10" stroke="#4A4A4A" stroke-width="1" fill="none"/><path d="M9.89 2.11 A5.5 5.5 0 0 1 2.11 9.89" stroke="#F4F3EE" stroke-width="1" fill="none"/></svg>
<div class="t" style="left:302.2px;top:514px;letter-spacing:1.64px;">Schacht 3</div>
<div class="t" style="left:240.0px;top:410px;letter-spacing:1.25px;letter-spacing:1.0px;">63</div>
<div class="t" style="left:248.0px;top:431px;letter-spacing:1.25px;letter-spacing:1.0px;">0</div>
<div class="t" style="left:490.3px;top:410px;letter-spacing:1.25px;letter-spacing:1.0px;">0</div>
<div class="t" style="left:490.3px;top:431px;letter-spacing:1.25px;letter-spacing:1.0px;">0</div>
<div class="t" style="left:521.6px;top:409px;letter-spacing:1.24px;">Seitenlänge</div>
<div class="t" style="left:521.6px;top:429px;letter-spacing:1.25px;">Hoch/Quer</div>
<div class="t" style="left:521.6px;top:450px;letter-spacing:1.25px;">Schachtcode</div>
<div class="t" style="left:521.6px;top:472px;letter-spacing:1.25px;">Fachcode</div>
<div class="ro" style="left:648px;top:406px;width:41px;height:17px;"></div>
<div class="t" style="left:677.3px;top:410px;letter-spacing:1.25px;letter-spacing:1.0px;">0</div>
<div class="ro" style="left:648px;top:427px;width:41px;height:17px;"></div>
<div class="t" style="left:677.3px;top:431px;letter-spacing:1.25px;letter-spacing:1.0px;">0</div>
<div class="ro" style="left:648px;top:448px;width:41px;height:17px;"></div>
<div class="t" style="left:677.3px;top:452px;letter-spacing:1.25px;letter-spacing:1.0px;">0</div>
<div class="ro" style="left:648px;top:469px;width:41px;height:17px;"></div>
<div class="t" style="left:677.3px;top:473px;letter-spacing:1.25px;letter-spacing:1.0px;">0</div>
<svg class="ab" style="left:521.5px;top:495px" width="7" height="7"><path d="M0.5 0.5 L6.5 3.5 L0.5 6.5" stroke="#1A1AB0" stroke-width="1" fill="none"/></svg>
<div class="t" style="left:530.5px;top:493px;letter-spacing:1.49px;color:#1A1AB0;">Setup aufrufen</div>
<div class="cb" style="left:520px;top:513px"><svg width="12" height="12" style="position:absolute;left:0;top:0"></svg></div>
<div class="t" style="left:544.9px;top:514px;letter-spacing:1.53px;">Setup aktiv</div>
<div class="ab" style="left:4px;top:548px;width:714px;height:1px;background:#ACA899"></div>
<div class="ab" style="left:4px;top:549px;width:714px;height:1px;background:#FFFFFF"></div>
<div class="btn" style="left:10px;top:554px;width:104px;height:19px;"></div>
<div class="t dis" style="left:21.6px;top:558px;letter-spacing:1.30px;">Dateianhang</div>
<div class="btn" style="left:381px;top:554px;width:104px;height:19px;"></div>
<div class="t dis" style="left:425.0px;top:558px;letter-spacing:-1.33px;">OK</div>
<div class="btn" style="left:495px;top:554px;width:104px;height:19px;"></div>
<div class="t" style="left:524.5px;top:558px;letter-spacing:1.37px;">Zurück</div>
<div class="btn" style="left:609px;top:554px;width:104px;height:19px;"></div>
<div class="t dis" style="left:620.5px;top:558px;letter-spacing:1.21px;">Übernehmen</div>
</body></html>
